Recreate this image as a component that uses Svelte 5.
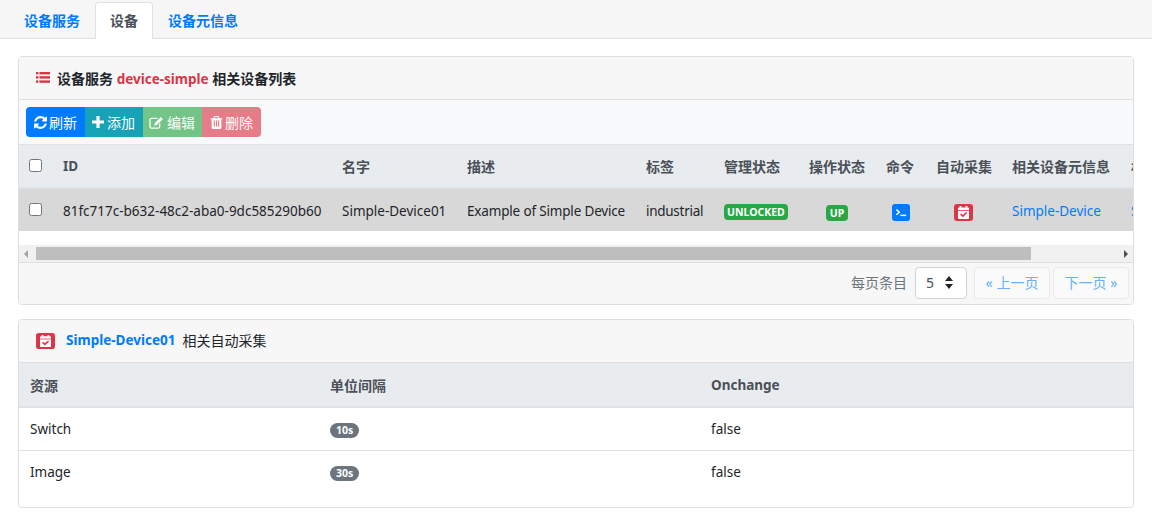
<script>
	const columns = [
		{ title: '名字', width: 125 },
		{ title: '描述', width: 179 },
		{ title: '标签', width: 78 },
		{ title: '管理状态', width: 85 },
		{ title: '操作状态', width: 77 },
		{ title: '命令', width: 50 },
		{ title: '自动采集', width: 76 },
		{ title: '相关设备元信息', width: 119 },
		{ title: '相关设备', width: 90 }
	];

	const readings = [
		{ name: 'Switch', interval: '10s', onchange: 'false' },
		{ name: 'Image', interval: '30s', onchange: 'false' }
	];
</script>

{#snippet calendar()}
	<svg class="square-icon" viewBox="0 0 19 17" preserveAspectRatio="none">
		<rect width="19" height="17" rx="3" fill="#dc3545" />
		<path fill="#fff" d="M5.6 3.4V2h1.8v1.4h4.2V2h1.8v1.4h.6a1 1 0 0 1 1 1V14a1 1 0 0 1-1 1H5a1 1 0 0 1-1-1V4.4a1 1 0 0 1 1-1z" />
		<rect x="4" y="6" width="11" height="0.8" fill="#dc3545" />
		<path fill="none" stroke="#dc3545" stroke-width="1.7" d="M6.6 10l2.2 2.1 3.8-3.6" />
	</svg>
{/snippet}

<div class="tabs">
	<a class="tab" href="#services">设备服务</a>
	<a class="tab active" href="#devices">设备</a>
	<a class="tab" href="#profiles">设备元信息</a>
</div>

<main class="page">
	<section class="card">
		<header class="card-header first">
			<svg class="list-icon" viewBox="0 0 14 11" fill="#dc3545">
				<rect width="2.4" height="2.4" /><rect x="3.4" width="10.6" height="2.4" />
				<rect y="4.2" width="2.4" height="2.4" /><rect x="3.4" y="4.2" width="10.6" height="2.4" />
				<rect y="8.4" width="2.4" height="2.4" /><rect x="3.4" y="8.4" width="10.6" height="2.4" />
			</svg>
			<strong>设备服务 <span class="danger latin">device-simple</span> 相关设备列表</strong>
		</header>

		<div class="toolbar">
			<div class="btn-group">
				<button class="btn primary">
					<svg viewBox="0 0 1536 1536" fill="currentColor"><path d="M1511 928q0 5-1 7-64 268-268 434.5t-478 166.5q-146 0-282.5-55t-243.5-157l-129 129q-19 19-45 19t-45-19-19-45v-448q0-26 19-45t45-19h448q26 0 45 19t19 45-19 45l-137 137q71 66 161 102t187 36q134 0 250-65t186-179q11-17 53-117 8-23 30-23h192q13 0 22.5 9.5t9.5 22.5zm25-800v448q0 26-19 45t-45 19h-448q-26 0-45-19t-19-45 19-45l138-138q-148-137-349-137-134 0-250 65t-186 179q-11 17-53 117-8 23-30 23h-199q-13 0-22.5-9.5t-9.5-22.5v-7q65-268 270-434.5t480-166.5q146 0 284 55.5t245 156.5l130-129q19-19 45-19t45 19 19 45z" /></svg>
					刷新
				</button>
				<button class="btn info">
					<svg class="plus" viewBox="0 0 12 12" fill="currentColor"><path d="M4.4 0h3.2v4.4H12v3.2H7.6V12H4.4V7.6H0V4.4h4.4z" /></svg>
					添加
				</button>
				<button class="btn success">
					<svg class="edit" viewBox="0 0 16 14" fill="none" stroke="currentColor"><path stroke-width="1.4" d="M11.5 8v3.4a1.6 1.6 0 0 1-1.6 1.6H2.6A1.6 1.6 0 0 1 1 11.4V4.1a1.6 1.6 0 0 1 1.6-1.6H9" /><path fill="currentColor" stroke="none" d="M12.6 1.2l2.2 2.2-6.4 6.4-2.9.7.7-2.9z" /></svg>
					编辑
				</button>
				<button class="btn danger-btn">
					<svg viewBox="0 0 1408 1536" fill="currentColor"><path d="M512 1248v-704q0-14-9-23t-23-9h-64q-14 0-23 9t-9 23v704q0 14 9 23t23 9h64q14 0 23-9t9-23zm256 0v-704q0-14-9-23t-23-9h-64q-14 0-23 9t-9 23v704q0 14 9 23t23 9h64q14 0 23-9t9-23zm256 0v-704q0-14-9-23t-23-9h-64q-14 0-23 9t-9 23v704q0 14 9 23t23 9h64q14 0 23-9t9-23zm-544-992h448l-48-117q-7-9-17-11h-317q-10 2-17 11zm928 32v64q0 14-9 23t-23 9h-96v948q0 83-47 143.5t-113 60.5h-832q-66 0-113-58.5t-47-141.5v-952h-96q-14 0-23-9t-9-23v-64q0-14 9-23t23-9h309l70-167q15-37 54-63t79-26h320q40 0 79 26t54 63l70 167h309q14 0 23 9t9 23z" /></svg>
					删除
				</button>
			</div>
		</div>

		<div class="table-wrap">
			<table class="devices">
				<colgroup>
					<col style="width: 32px" />
					<col style="width: 279px" />
					{#each columns as col}
						<col style="width: {col.width}px" />
					{/each}
				</colgroup>
				<thead>
					<tr>
						<th class="check"><span class="checkbox"></span></th>
						<th class="latin">ID</th>
						{#each columns as col}
							<th>{col.title}</th>
						{/each}
					</tr>
				</thead>
				<tbody>
					<tr>
						<td class="check"><span class="checkbox"></span></td>
						<td>81fc717c-b632-48c2-aba0-9dc585290b60</td>
						<td>Simple-Device01</td>
						<td class="tight">Example of Simple Device</td>
						<td class="tighter">industrial</td>
						<td><span class="badge green">UNLOCKED</span></td>
						<td class="center"><span class="badge green">UP</span></td>
						<td class="center">
							<svg class="square-icon terminal" viewBox="0 0 18 17">
								<rect width="18" height="17" rx="3" fill="#007bff" />
								<path fill="none" stroke="#fff" stroke-width="1.5" d="M4.4 5.6l2.9 2.6-2.9 2.6" />
								<rect x="8.4" y="10.6" width="5.8" height="1.5" fill="#fff" />
							</svg>
						</td>
						<td class="center">{@render calendar()}</td>
						<td><a href="#profile">Simple-Device</a></td>
						<td><a href="#more">Simple</a></td>
					</tr>
				</tbody>
			</table>
		</div>

		<div class="scrollbar" aria-hidden="true">
			<span class="arrow left"></span>
			<span class="thumb"></span>
			<span class="arrow right"></span>
		</div>

		<footer class="card-footer">
			<span class="per-page">每页条目</span>
			<span class="select">5
				<svg viewBox="0 0 8 13" fill="#212529"><path d="M4 0l4 5H0zM4 13L0 8h8z" /></svg>
			</span>
			<button class="page-btn prev">« 上一页</button>
			<button class="page-btn">下一页 »</button>
		</footer>
	</section>

	<section class="card second">
		<header class="card-header">
			{@render calendar()}
			<strong class="link-title latin">Simple-Device01</strong>
			<span>相关自动采集</span>
		</header>

		<table class="readings">
			<colgroup>
				<col style="width: 300px" />
				<col style="width: 381px" />
				<col />
			</colgroup>
			<thead>
				<tr><th>资源</th><th>单位间隔</th><th class="latin">Onchange</th></tr>
			</thead>
			<tbody>
				{#each readings as item}
					<tr>
						<td>{item.name}</td>
						<td><span class="badge grey">{item.interval}</span></td>
						<td>{item.onchange}</td>
					</tr>
				{/each}
			</tbody>
		</table>
	</section>
</main>

<style>
:global(body) {
	margin: 0;
	background: #fff;
	overflow: hidden;
	font-family: "Noto Sans", "Noto Sans CJK SC", sans-serif;
	font-size: 14px;
	line-height: 21px;
	color: #212529;
}

svg {
	display: block;
	flex: none;
}

.latin {
	font-size: 13.5px;
}

.tabs {
	display: flex;
	height: 36px;
	padding: 2px 0 0 9px;
	background: #f6f6f6;
	border-bottom: 1px solid #dee2e6;
}

.tab {
	padding: 7px 14px 0;
	margin-bottom: -1px;
	border: 1px solid transparent;
	border-bottom: 0;
	border-radius: 4px 4px 0 0;
	font-weight: 700;
	color: #007bff;
	text-decoration: none;
}

.tab.active {
	background: #fff;
	border-color: #dee2e6;
	color: #495057;
}

.page {
	padding: 17px 18px 0;
}

.card {
	border: 1px solid #dfdfdf;
	border-radius: 4px;
	overflow: hidden;
}

.second {
	margin-top: 14px;
}

.card-header {
	display: flex;
	align-items: center;
	gap: 7px;
	height: 41px;
	padding: 0 17px 1px;
	background: #f7f7f7;
	border-bottom: 1px solid #dfdfdf;
}

.card-header.first {
	height: 41px;
	padding: 1px 17px 0;
}

.list-icon {
	width: 14px;
	height: 11px;
	margin-bottom: 2px;
}

.danger {
	color: #dc3545;
}

.toolbar {
	height: 44px;
	padding: 7px 7px 0;
	box-sizing: border-box;
	background: #f8f9fa;
}

.btn-group {
	display: flex;
	width: max-content;
	border-radius: 4px;
	overflow: hidden;
}

.btn {
	display: flex;
	align-items: center;
	justify-content: center;
	gap: 2px;
	width: 59px;
	height: 30px;
	padding: 0;
	border: 0;
	color: #fff;
	font: inherit;
}

.btn svg {
	width: 13px;
	height: 13px;
}

.btn .plus {
	width: 12px;
	height: 12px;
	margin-right: 1px;
	margin-left: -1px;
}

.btn .edit {
	width: 15px;
	height: 13px;
	margin-right: 1px;
	margin-left: -1px;
}

.primary { background: #007bff; }
.info { background: #17a2b8; width: 58px; }
.success { background: #72c487; }
.danger-btn { background: #e67c87; }

.table-wrap {
	overflow: hidden;
	height: 101px;
}

table {
	border-collapse: collapse;
	table-layout: fixed;
}

.devices {
	width: 1190px;
}

.readings {
	width: 100%;
}

th {
	height: 43px;
	padding: 2px 12px 0;
	box-sizing: border-box;
	background: #e9ecef;
	border-top: 1px solid #dee2e6;
	border-bottom: 2px solid #dee2e6;
	color: #495057;
	font-weight: 700;
	text-align: left;
	white-space: nowrap;
}

.devices td {
	height: 43px;
	padding: 3px 12px 0;
	box-sizing: border-box;
	background: #d9d8d8;
	font-size: 13.5px;
	white-space: nowrap;
	overflow: hidden;
}

.devices td.tight {
	letter-spacing: -0.17px;
}

.devices td.tighter {
	letter-spacing: -0.28px;
}

.devices th:nth-child(n+3) {
	padding-right: 0;
}

.devices td:nth-child(n+3) {
	padding-right: 0;
}

.devices .center {
	padding: 5px 0 0 3px;
	text-align: center;
}

.devices th.check {
	padding: 0 0 0 10px;
}

.devices td.check {
	padding: 0 0 0 10px;
}

.checkbox {
	display: block;
	width: 13px;
	height: 13px;
	box-sizing: border-box;
	background: #fff;
	border: 1px solid #767676;
	border-radius: 2.5px;
}

.badge {
	display: inline-block;
	padding: 0 3px;
	border-radius: 4px;
	color: #fff;
	font-size: 10.5px;
	font-weight: 700;
	line-height: 16px;
	vertical-align: middle;
}

.center .badge {
	padding: 0 4px;
}

.green {
	background: #28a745;
}

.grey {
	padding: 0 6px;
	border-radius: 8px;
	line-height: 15px;
	background: #6c757d;
}

.square-icon {
	width: 19px;
	height: 16px;
}

.center .square-icon {
	width: 19px;
	height: 17px;
	margin: 0 auto;
}

.center .terminal {
	width: 18px;
	height: 17px;
}

a {
	color: #007bff;
	text-decoration: none;
}

.scrollbar {
	display: flex;
	align-items: center;
	height: 17px;
	background: #f1f1f1;
	border-bottom: 1px solid #dfdfdf;
}

.arrow {
	flex: none;
	width: 0;
	height: 0;
	border-top: 4px solid transparent;
	border-bottom: 4px solid transparent;
}

.arrow.left {
	margin: 0 8px 0 5px;
	border-right: 4px solid #a3a3a3;
}

.arrow.right {
	margin: 0 5px 0 auto;
	border-left: 4px solid #505050;
}

.thumb {
	width: 995px;
	height: 13px;
	background: #bebebe;
}

.card-footer {
	display: flex;
	align-items: center;
	justify-content: flex-end;
	height: 39px;
	padding: 0 4px 2px 0;
	background: #f7f7f7;
}

.per-page {
	margin-right: 8px;
	color: #6c757d;
}

.select {
	display: flex;
	align-items: center;
	justify-content: space-between;
	width: 52px;
	height: 32px;
	padding: 0 13px 0 10px;
	box-sizing: border-box;
	margin-right: 7px;
	background: #fff;
	border: 1px solid #ced4da;
	border-radius: 4px;
	color: #495057;
}

.select svg {
	width: 8px;
	height: 13px;
}

.page-btn {
	width: 76px;
	height: 32px;
	padding: 0;
	background: #fafafa;
	border: 1px solid #eaeaea;
	border-radius: 4px;
	color: #66b0ff;
	font: inherit;
}

.prev {
	margin-right: 3px;
}

.link-title {
	margin-left: 4px;
	color: #007bff;
}

.readings td {
	height: 43px;
	padding: 2px 12px 0 11px;
	border-bottom: 1px solid #dee2e6;
	font-size: 13.5px;
	box-sizing: border-box;
}

.readings th {
	padding: 2px 12px 0 11px;
	height: 44px;
	border-top: 0;
}

.readings tr:last-child td {
	border-bottom: 0;
}

.readings tbody::after {
	content: "";
	display: block;
	height: 14px;
}
</style>
